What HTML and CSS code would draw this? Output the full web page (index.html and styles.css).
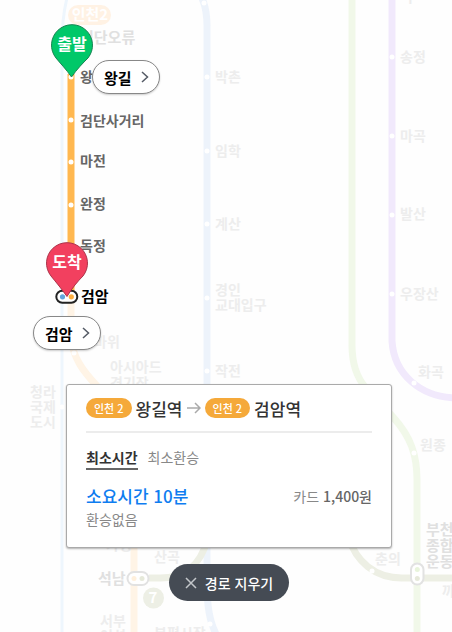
FILE: index.html
```html
<!DOCTYPE html>
<html lang="ko">
<head>
<meta charset="utf-8">
<meta name="viewport" content="width=device-width, initial-scale=1">
<title>지하철 노선도</title>
<link rel="stylesheet" href="styles.css">
</head>
<body>
<main class="subway">
  <svg class="map" role="img" aria-label="왕길에서 검암까지의 노선도">
    <g class="line">
      <path class="airport" d="M67 -2 C63 14 62 24 62 44 V640"/>
      <path class="incheon1" d="M201 -4 C206 6 207 14 207 26 V566 C207 592 206 614 216 634"/>
      <path class="seohae" d="M352 -2 V345 C352 365 357 378 366 388 L393 417 C411 437 417 455 417 480 V640"/>
      <path class="line5" d="M392 -2 V341 C394 374 420 397 456 398"/>
      <path class="line7" d="M149 578 H160 C185 578 201 564 207 540 M348 536 C356 562 375 578 402 578 H460"/>
      <path class="incheon2" d="M71 290 V338 C73 358 83 371 97 386 L122 412 C130 421 134 430 134 442 V640"/>
      <path class="route" d="M71 74 V296"/>
    </g>
    <g class="stop">
      <circle cx="71" cy="77" r="2.5"/><circle cx="71" cy="120" r="2.5"/><circle cx="71" cy="162" r="2.5"/><circle cx="71" cy="205" r="2.5"/>
      <circle cx="74" cy="353" r="2.5"/><circle cx="62" cy="407" r="2.5"/>
      <circle cx="204" cy="3" r="2.5"/><circle cx="207" cy="77" r="2.5"/><circle cx="207" cy="151" r="2.5"/><circle cx="207" cy="224" r="2.5"/><circle cx="207" cy="298" r="2.5"/><circle cx="207" cy="371" r="2.5"/><circle cx="210" cy="624" r="2.5"/>
      <circle cx="392" cy="57" r="2.5"/><circle cx="392" cy="136" r="2.5"/><circle cx="392" cy="215" r="2.5"/><circle cx="392" cy="294" r="2.5"/><circle cx="414" cy="383" r="2.5"/>
      <circle cx="414" cy="453" r="2.5"/><circle cx="372" cy="571" r="2.5"/>
    </g>
    <g class="transfer">
      <rect x="127.5" y="572" width="21" height="13" rx="6.5"/><circle class="dot-incheon2" cx="134" cy="578.5" r="2.5"/><circle class="dot-line7" cx="142" cy="578.5" r="2.5"/>
      <rect x="411" y="563.5" width="12.5" height="21" rx="6.25"/><circle class="dot-seohae" cx="417.3" cy="569.5" r="2.5"/><circle class="dot-line7" cx="417.3" cy="578.5" r="2.5"/>
    </g>
    <g class="transfer active">
      <rect x="56.3" y="290.8" width="21" height="12" rx="6"/><circle class="dot-blue" cx="62.5" cy="296.8" r="2.6"/><circle class="dot-orange" cx="71.3" cy="296.8" r="2.6"/>
    </g>
    <rect class="badge-incheon2" x="68" y="5" width="43" height="20" rx="10"/>
    <text class="badge-text" x="90" y="20">인천2</text>
    <circle class="badge-line7" cx="153.5" cy="598" r="10.5"/>
    <text class="badge-text" x="153" y="603">7</text>

    <g class="name faded">
      <text x="94" y="347">바위</text>
      <text x="110" y="372">아시아드</text><text x="110" y="388">경기장</text>
      <text x="30" y="397">청라</text><text x="30" y="412">국제</text><text x="30" y="427">도시</text>
      <text x="215" y="82">박촌</text><text x="215" y="156">임학</text><text x="215" y="229">계산</text>
      <text x="215" y="295">경인</text><text x="215" y="310">교대입구</text><text x="215" y="376">작전</text>
      <text x="400" y="62">송정</text><text x="400" y="141">마곡</text><text x="400" y="219">발산</text><text x="400" y="299">우장산</text>
      <text x="404" y="2">구</text>
      <text x="418" y="377">화곡</text><text x="420" y="450">원종</text><text x="375" y="564">춘의</text>
      <text x="154" y="562">산곡</text><text x="100" y="626">서부</text><text x="100" y="641">여성</text><text x="154" y="638">부평시장</text>
      <text x="106" y="550">가정</text><text x="442" y="596">까치울</text>
    </g>
    <g class="name faded strong">
      <text x="80" y="43">검단오류</text><text x="98" y="584">석남</text>
      <text x="426" y="535">부천</text><text x="426" y="551">종합</text><text x="426" y="567">운동장</text>
    </g>
    <g class="name">
      <text x="80" y="82">왕길</text><text x="80" y="126">검단사거리</text><text x="80" y="166">마전</text><text x="80" y="209">완정</text><text x="80" y="251">독정</text>
    </g>
    <text class="name-end" x="81" y="302">검암</text>

    <g class="pin start">
      <path d="M71.5 77 C66 69 60 63 56 58 A20.5 20.5 0 1 1 88 58 C83 63 77 69 71.5 77Z"/>
      <text x="72" y="50">출발</text>
    </g>
    <g class="pin finish">
      <path d="M67 296.5 C61 288 55 281 51 276 A20.5 20.5 0 1 1 83 276 C78 281 72 288 67 296.5Z"/>
      <text x="67" y="268">도착</text>
    </g>
  </svg>

  <button class="station station-start" type="button">왕길
    <svg class="chevron" viewBox="0 0 8 12" aria-hidden="true"><path d="M1 1 L6.5 6 L1 11"/></svg>
  </button>
  <button class="station station-finish" type="button">검암
    <svg class="chevron" viewBox="0 0 8 12" aria-hidden="true"><path d="M1 1 L6.5 6 L1 11"/></svg>
  </button>

  <section class="card">
    <h1 class="trip">
      <span class="tag">인천 2</span><span>왕길역</span>
      <svg class="arrow" viewBox="0 0 14 12" aria-hidden="true"><path d="M0 6 H13 M8 1 L13 6 L8 11"/></svg>
      <span class="tag">인천 2</span><span>검암역</span>
    </h1>
    <div class="tabs">
      <button class="tab selected" type="button">최소시간</button>
      <button class="tab" type="button">최소환승</button>
    </div>
    <div class="summary">
      <strong class="time">소요시간 10분</strong>
      <span class="fare">카드 <b>1,400원</b></span>
    </div>
    <p class="changes">환승없음</p>
  </section>

  <button class="clear" type="button">
    <svg class="cross" viewBox="0 0 12 12" aria-hidden="true"><path d="M1 1 L11 11 M11 1 L1 11"/></svg>
    경로 지우기
  </button>
</main>
</body>
</html>
```

FILE: styles.css
```css
* { box-sizing: border-box; }

body {
  margin: 0;
  background: #fefefe;
  font-family: "Noto Sans CJK KR", sans-serif;
  color: #333;
}

button {
  margin: 0;
  padding: 0;
  border: 0;
  background: none;
  font: inherit;
  color: inherit;
  cursor: pointer;
}

.subway {
  position: relative;
  display: flex;
  flex-direction: column;
  align-items: center;
  justify-content: flex-end;
  gap: 16px;
  min-height: 100vh;
  padding: 0 60px 31px 66px;
  overflow: hidden;
}

/* Map */
.map {
  position: absolute;
  inset: 0;
  width: 100%;
  height: 100%;
}

.line path { fill: none; stroke-width: 7; }
.line .airport { stroke: #eef6fd; stroke-width: 3; }
.line .incheon1 { stroke: #edf3fb; }
.line .seohae { stroke: #f1f8e9; }
.line .line5 { stroke: #f1e9fc; }
.line .line7 { stroke: #edefe4; }
.line .incheon2 { stroke: #fff4e6; }
.line .route { stroke: #ffb850; }

.stop { fill: #fff; }

.transfer rect { fill: #fff; stroke: #e2e2e2; stroke-width: 2; }
.transfer.active rect { stroke: #222; }
.dot-incheon2 { fill: #fff0dc; }
.dot-line7 { fill: #e6e9da; }
.dot-seohae { fill: #e8f4db; }
.dot-blue { fill: #64a5dc; }
.dot-orange { fill: #ffb042; }

.badge-incheon2 { fill: #fff2e4; }
.badge-line7 { fill: #edefe5; }
.badge-text { fill: #fff; font-size: 15px; font-weight: 700; text-anchor: middle; }

.name { fill: #666; font-size: 14px; font-weight: 700; }
.name.faded { fill: #ededed; }
.name.strong { fill: #e0e0e0; font-size: 15px; }
.name-end { fill: #000; font-size: 15px; font-weight: 700; }

.pin text { fill: #fff; font-size: 16px; font-weight: 700; text-anchor: middle; }
.pin.start path { fill: #00c869; stroke: #168451; }
.pin.finish path { fill: #f2405f; stroke: #ac3349; }

/* Station labels pinned to the map */
.station {
  position: absolute;
  display: flex;
  align-items: center;
  gap: 9px;
  height: 34px;
  padding: 0 10px 0 11px;
  border: 1px solid #888;
  border-radius: 17px;
  background: #fff;
  box-shadow: 0 1px 2px rgba(0, 0, 0, .2);
  color: #000;
  font-size: 15px;
  font-weight: 700;
}

.station-start { left: 92px; top: 60px; }
.station-finish { left: 33px; top: 316px; }

.chevron {
  width: 8px;
  height: 12px;
  fill: none;
  stroke: #555b66;
  stroke-width: 1.5;
}

/* Route summary */
.card {
  position: relative;
  width: 100%;
  padding: 0 19px 17px;
  border: 1px solid #aaa;
  border-radius: 3px;
  background: #fff;
  box-shadow: 0 1px 2px rgba(0, 0, 0, .3);
}

.trip {
  display: flex;
  align-items: center;
  gap: 4px;
  height: 48px;
  margin: 0;
  border-bottom: 2px solid #ececec;
  font-size: 17px;
  font-weight: 500;
}

.tag {
  padding: 0 8px;
  border-radius: 10px;
  background: #f5a93a;
  color: #fff;
  font-size: 11px;
  line-height: 20px;
}

.arrow {
  width: 14px;
  height: 12px;
  fill: none;
  stroke: #aaa;
  stroke-width: 1.5;
}

.tabs {
  display: flex;
  gap: 10px;
  margin-top: 13px;
}

.tab {
  height: 24px;
  border-bottom: 2px solid transparent;
  color: #888;
  font-size: 14px;
  line-height: 22px;
}

.tab.selected {
  border-color: #666;
  color: #333;
  font-weight: 700;
}

.summary {
  display: flex;
  align-items: center;
  justify-content: space-between;
  margin-top: 13px;
  line-height: 26px;
}

.time { color: #0f7df0; font-size: 17px; font-weight: 500; }
.fare { color: #888; font-size: 14px; }
.fare b { color: #666; font-weight: 500; }

.changes {
  margin: 0;
  color: #888;
  font-size: 14px;
  line-height: 21px;
}

.clear {
  position: relative;
  display: flex;
  align-items: center;
  gap: 8px;
  height: 37px;
  padding: 0 16px;
  border-radius: 19px;
  background: #454b54;
  color: #fff;
  font-size: 14px;
  font-weight: 500;
}

.cross {
  width: 12px;
  height: 12px;
  fill: none;
  stroke: #c3c6ca;
  stroke-width: 1.5;
}
```
